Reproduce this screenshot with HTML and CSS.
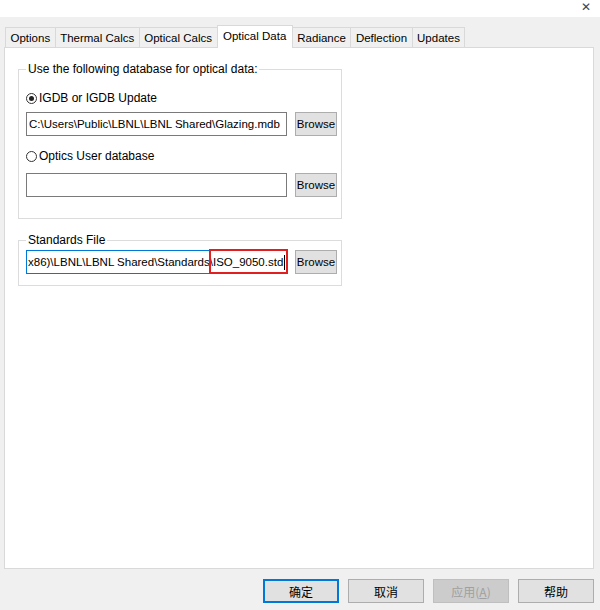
FILE: index.html
```html
<!DOCTYPE HTML>
<html lang="en">

<head>
    <meta charset="utf-8">
    <title>Preferences</title>
    <link rel="stylesheet" href="styles.css">
</head>

<body>
    <div class="titlebar">
        <span class="close">&#x2715;</span>
    </div>

    <div class="dialog">
        <!-- Tab strip -->
        <div class="tabs">
            <div class="tab">Options</div>
            <div class="tab">Thermal Calcs</div>
            <div class="tab">Optical Calcs</div>
            <div class="tab active">Optical Data</div>
            <div class="tab">Radiance</div>
            <div class="tab">Deflection</div>
            <div class="tab">Updates</div>
        </div>

        <div class="panel">
            <fieldset class="group db-group">
                <legend>Use the following database for optical data:</legend>

                <label class="radio first"><span class="dot checked"></span>IGDB or IGDB Update</label>
                <div class="row">
                    <div class="field">C:\Users\Public\LBNL\LBNL Shared\Glazing.mdb</div>
                    <button class="browse">Browse</button>
                </div>

                <label class="radio second"><span class="dot"></span>Optics User database</label>
                <div class="row">
                    <div class="field"></div>
                    <button class="browse">Browse</button>
                </div>
            </fieldset>

            <fieldset class="group std-group">
                <legend>Standards File</legend>
                <div class="row">
                    <div class="field focused">x86)\LBNL\LBNL Shared\Standards\ISO_9050.std<span class="caret"></span><span class="mark"></span></div>
                    <button class="browse">Browse</button>
                </div>
            </fieldset>
        </div>

        <!-- Bottom buttons -->
        <div class="footer">
            <button class="btn default">确定</button>
            <button class="btn">取消</button>
            <button class="btn" disabled>应用(<u>A</u>)</button>
            <button class="btn">帮助</button>
        </div>
    </div>
</body>

</html>
```

FILE: styles.css
```css
body {
    margin: 0;
    background-color: #f0f0f0;
    font-family: "Liberation Sans", Arial, sans-serif;
    font-size: 11.5px;
    color: #000;
}

.titlebar {
    height: 17px;
    background-color: #fff;
    position: relative;
}

.close {
    position: absolute;
    right: 9px;
    top: 0;
    font-family: "DejaVu Sans", sans-serif;
    font-size: 12px;
    color: #444;
}

.dialog {
    padding: 8px 6px 0 4px;
}

/* Tabs */
.tabs {
    display: flex;
    padding-left: 1px;
    height: 22px;
    align-items: flex-end;
}

.tab {
    height: 20px;
    line-height: 20px;
    padding: 0 4.5px;
    border: 1px solid #d9d9d9;
    border-bottom: none;
    margin-right: -1px;
    background-color: #f0f0f0;
    box-sizing: border-box;
    font-size: 11.5px;
}

.tab.active {
    height: 23px;
    line-height: 21px;
    background-color: #fff;
    position: relative;
    z-index: 1;
    margin-bottom: -1px;
    padding: 0 5.5px;
}

.panel {
    background-color: #fff;
    border: 1px solid #d9d9d9;
    height: 522px;
    padding: 14px 0 0 13px;
    box-sizing: border-box;
}

.group {
    width: 324px;
    box-sizing: border-box;
    border: 1px solid #dcdcdc;
    margin: 0;
    padding: 0 0 0 7px;
}

.group legend {
    padding: 0 2px;
    margin-left: 0;
    font-size: 12px;
}

.db-group {
    height: 157px;
}

.std-group {
    margin-top: 14px;
    height: 53px;
}

.std-group .row {
    margin-top: 3px;
}

.radio {
    display: flex;
    align-items: center;
    height: 16px;
    font-size: 12px;
}

.radio.first {
    margin-top: 14px;
    margin-bottom: 6px;
}

.radio.second {
    margin-top: 12px;
    margin-bottom: 9px;
}

.dot {
    width: 11px;
    height: 11px;
    border: 1px solid #333;
    border-radius: 50%;
    box-sizing: border-box;
    margin-right: 2px;
    position: relative;
}

.dot.checked::after {
    content: "";
    position: absolute;
    left: 2px;
    top: 2px;
    width: 5px;
    height: 5px;
    border-radius: 50%;
    background-color: #222;
}

.row {
    display: flex;
    gap: 8px;
    align-items: center;
}

.field {
    width: 261px;
    height: 24px;
    border: 1px solid #7a7a7a;
    box-sizing: border-box;
    line-height: 22px;
    padding-left: 2px;
    white-space: nowrap;
    overflow: hidden;
    position: relative;
}

.field.focused {
    border-color: #0078d7;
    padding-left: 1px;
    overflow: visible;
}

.caret {
    display: inline-block;
    width: 1px;
    height: 15px;
    background-color: #000;
    vertical-align: middle;
    margin-left: 1px;
}

/* red highlight drawn over the file name */
.mark {
    position: absolute;
    left: 182px;
    top: -2px;
    height: 25px;
    width: 79px;
    box-sizing: border-box;
    border: 2px solid #e02020;
}

.browse {
    width: 42px;
    height: 24px;
    border: 1px solid #adadad;
    background-color: #e1e1e1;
    font-family: inherit;
    font-size: 11.5px;
    padding: 0;
}

/* Footer */
.footer {
    display: flex;
    justify-content: flex-end;
    gap: 9px;
    margin-top: 10px;
}

.btn {
    width: 76px;
    height: 24px;
    border: 1px solid #adadad;
    background-color: #e1e1e1;
    font-family: "Noto Sans CJK SC", sans-serif;
    font-size: 12px;
    padding: 0;
    color: #000;
}

.btn.default {
    border: 2px solid #0078d7;
}

.btn:disabled {
    color: #a0a0a0;
    background-color: #cccccc;
    border-color: #bfbfbf;
}
```
